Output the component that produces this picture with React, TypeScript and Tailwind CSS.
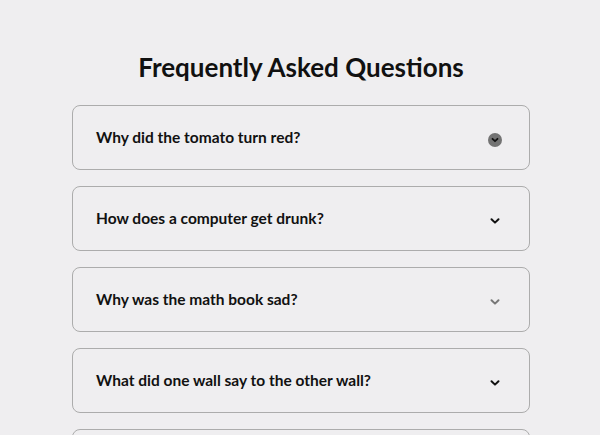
import { useState } from "react";

const questions = [
  { q: "Why did the tomato turn red?", icon: "circle" },
  { q: "How does a computer get drunk?", icon: "dark" },
  { q: "Why was the math book sad?", icon: "light" },
  { q: "What did one wall say to the other wall?", icon: "dark" },
  { q: "What do you call a fake noodle?", icon: "dark" },
];

function Chevron({ kind }: { kind: string }) {
  if (kind === "circle") {
    return (
      <span className="mt-[4px] flex h-[14px] w-[14px] items-center justify-center rounded-full bg-[#737373]">
        <svg width="10" height="10" viewBox="0 0 10 10" fill="none">
          <path d="M2.5 3.8 L5 6.2 L7.5 3.8" stroke="#111" strokeWidth="1.8" strokeLinecap="round" strokeLinejoin="round" />
        </svg>
      </span>
    );
  }
  return (
    <svg className="mt-[4px]" width="14" height="14" viewBox="0 0 14 14" fill="none">
      <path
        d="M3.5 5.2 L7 8.6 L10.5 5.2"
        stroke={kind === "dark" ? "#111" : "#777"}
        strokeWidth="2"
        strokeLinecap="round"
        strokeLinejoin="round"
      />
    </svg>
  );
}

export default function App() {
  const [open, setOpen] = useState<number | null>(null);
  return (
    <div className="h-[435px] overflow-hidden bg-[#efeef0] font-['Lato','Open_Sans',sans-serif] text-[#111]">
      <div className="ml-[72px] w-[458px] pt-[49px]">
        <h1 className="mb-[20px] text-center text-[26px] font-bold leading-[36px]">Frequently Asked Questions</h1>
        <div className="flex flex-col gap-4">
          {questions.map((item, i) => (
            <button
              key={item.q}
              onClick={() => setOpen(open === i ? null : i)}
              className="flex h-[65px] items-center justify-between rounded-lg border border-[#acacac] pl-[23px] pr-[27px] text-left"
            >
              <span className="text-[15.5px] font-bold">{item.q}</span>
              <Chevron kind={item.icon} />
            </button>
          ))}
        </div>
      </div>
    </div>
  );
}
